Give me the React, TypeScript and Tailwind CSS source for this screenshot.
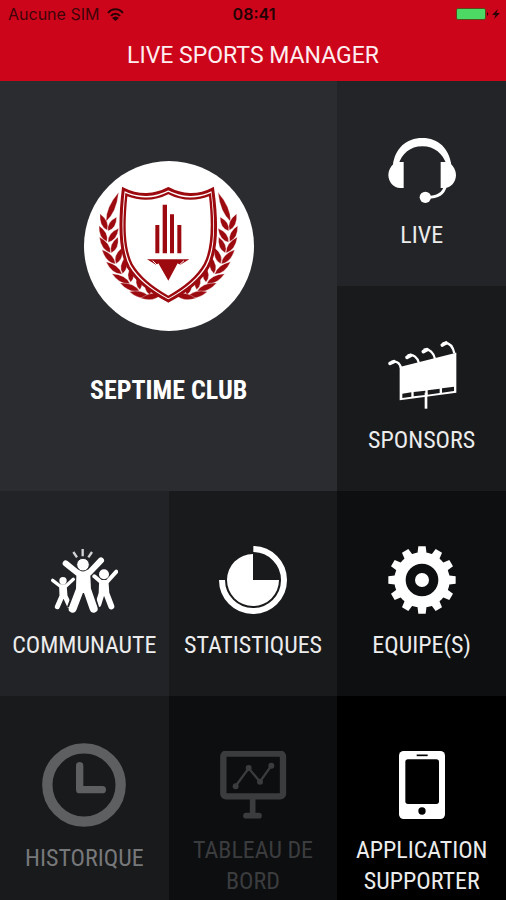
import type { ReactNode } from 'react'

type Point = [number, number]

type TileProps = {
  label: string
  className: string
  iconClassName?: string
  disabled?: boolean
  icon: ReactNode
}

// base and tip of every leaf on the left branch
const leaves: [Point, Point][] = [
  [[98, 218], [136, 130]],
  [[102, 244], [80, 194]],
  [[104, 246], [130, 204]],
  [[101, 278], [77, 230]],
  [[104, 280], [136, 238]],
  [[112, 312], [78, 264]],
  [[114, 312], [134, 264]],
  [[126, 345], [86, 302]],
  [[128, 344], [146, 296]],
  [[146, 376], [98, 338]],
  [[148, 374], [156, 324]],
  [[170, 404], [116, 374]],
  [[172, 400], [174, 350]],
  [[198, 426], [140, 402]],
  [[200, 422], [194, 374]],
  [[228, 444], [168, 428]],
  [[230, 438], [218, 394]],
  [[262, 438], [202, 448]],
]

function leafPath([[bx, by], [tx, ty]]: [Point, Point]) {
  const dx = tx - bx
  const dy = ty - by
  const length = Math.hypot(dx, dy)
  const mx = bx + dx * 0.4
  const my = by + dy * 0.4
  const ox = (dy / length) * 18
  const oy = (dx / length) * 18
  return `M${bx} ${by}Q${mx - ox} ${my + oy} ${tx} ${ty}Q${mx + ox} ${my - oy} ${bx} ${by}Z`
}

function Branch() {
  return (
    <g fill="#9c0a10" stroke="#fff" strokeWidth="1">
      {leaves.map((leaf, i) => (
        <path key={i} d={leafPath(leaf)} />
      ))}
    </g>
  )
}

function ClubLogo() {
  const shield =
    'M150 120C196 144 246 140 285 119C324 140 374 144 418 120C432 222 432 302 404 354C378 400 330 432 285 456C240 432 192 400 165 354C138 302 138 222 150 120Z'
  return (
    <svg viewBox="32 36 510 510" className="size-full" aria-hidden="true">
      <circle cx="287" cy="291" r="255" fill="#fff" />
      <Branch />
      <g transform="translate(570 0) scale(-1 1)">
        <Branch />
      </g>
      <path d={shield} fill="#fff" stroke="#9c0a10" strokeWidth="9" />
      <path
        d="M159 137C204 155 248 151 285 132C322 151 366 155 410 137C420 226 420 298 394 347C370 390 328 420 285 444C242 420 200 390 175 347C150 298 150 226 159 137Z"
        fill="none"
        stroke="#9c0a10"
        strokeWidth="7"
      />
      <g fill="#9c0a10">
        <path d="M246 228H258V313H246ZM268 167H281V313H268ZM290 196H302V313H290ZM312 228H324V313H312Z" />
        <path d="M221 331H348L320 348L313 343L285 395L255 343L249 348Z" />
      </g>
      <path d="M238 335L253 350M332 335L316 350" stroke="#fff" strokeWidth="3" />
    </svg>
  )
}

function HeadsetIcon() {
  return (
    <svg viewBox="144 48 204 204" className="size-full" aria-hidden="true">
      <path
        d="M159 134C165 86 198 54 247 54S327 86 334 134H320C308 101 284 79 247 79S186 101 175 134Z"
        fill="#fff"
      />
      <path d="M161 126H191V204H180C162 204 145 186 145 165C145 151 152 139 161 131Z" fill="#fff" />
      <path d="M332 126H302V204H313C332 204 348 186 348 165C348 151 341 139 332 131Z" fill="#fff" />
      <path d="M316 198C311 221 294 232 262 232" fill="none" stroke="#fff" strokeWidth="9" />
      <circle cx="256" cy="232" r="17" fill="#fff" />
    </svg>
  )
}

function BillboardIcon() {
  return (
    <svg viewBox="144 35 204 204" className="size-full overflow-visible" aria-hidden="true">
      <path
        fillRule="evenodd"
        fill="#fff"
        d="M179 113L349 70V190L179 213ZM187 193V206L214 202V189ZM221 188V201L256 197V184ZM263 183V196L299 191V178ZM306 177V190L342 185V172Z"
      />
      <path d="M258 190V238" stroke="#fff" strokeWidth="8" />
      <g fill="none" stroke="#fff" strokeWidth="7">
        <path d="M154 98C170 94 179 100 183 116" />
        <path d="M203 78C221 74 233 84 237 102" />
        <path d="M251 61C269 58 281 70 285 89" />
        <path d="M308 42C326 38 338 50 343 72" />
      </g>
      <g stroke="#fff" strokeWidth="11" strokeLinecap="round">
        <path d="M150 102L162 97M201 84L212 78M250 67L261 61M307 47L318 41" />
      </g>
    </svg>
  )
}

function CommunityIcon() {
  return (
    <svg viewBox="151 48 204 204" className="size-full" aria-hidden="true">
      <g fill="none" stroke="#fff" strokeLinecap="round" strokeLinejoin="round">
        <path d="M159 151L181 168H199L221 148" strokeWidth="10" />
        <path d="M186 172L187 198L173 230M194 172L196 198L209 226" strokeWidth="15" />
        <path d="M284 139L304 156H322L350 125" strokeWidth="12" />
        <path d="M307 162L306 190L296 222M318 162L320 190L335 229" strokeWidth="18" />
      </g>
      <circle cx="190" cy="152" r="11" fill="#fff" />
      <circle cx="313" cy="133" r="15" fill="#fff" />
      <path
        d="M243 140L240 176L217 236M260 140L264 176L283 236"
        fill="none"
        stroke="#222327"
        strokeWidth="32"
        strokeLinejoin="round"
      />
      <g fill="none" stroke="#fff" strokeLinecap="round" strokeLinejoin="round">
        <path d="M198 100L234 129H268L304 91" strokeWidth="18" />
        <path d="M242 138L241 178L219 236M260 138L262 178L282 236" strokeWidth="24" />
        <path d="M251 134V176" strokeWidth="26" />
      </g>
      <circle cx="250" cy="104" r="19" fill="#fff" stroke="#222327" strokeWidth="3" />
      <path d="M249 57V79M221 66L232 82M277 66L266 82" stroke="#d4d4d5" strokeWidth="7" />
    </svg>
  )
}

function PieIcon() {
  return (
    <svg viewBox="148 48 204 204" className="size-full" aria-hidden="true">
      <path d="M250 72V150H328A78 78 0 1 1 250 72Z" fill="#fff" />
      <path d="M251 57A93 93 0 1 1 157 150" fill="none" stroke="#fff" strokeWidth="18" />
    </svg>
  )
}

function GearIcon() {
  const teeth = Array.from({ length: 12 }, (_, i) => i * 30)
  return (
    <svg viewBox="145 48 204 204" className="size-full" aria-hidden="true">
      <g fill="#fff">
        {teeth.map((angle) => (
          <path key={angle} d="M233 74L236 49H258L261 74Z" transform={`rotate(${angle} 247 150)`} />
        ))}
        <circle cx="247" cy="150" r="21" />
      </g>
      <circle cx="247" cy="150" r="66" fill="none" stroke="#fff" strokeWidth="34" />
    </svg>
  )
}

function ClockIcon() {
  return (
    <svg viewBox="127 39 252 252" className="size-full" aria-hidden="true">
      <circle cx="253" cy="165" r="110" fill="none" stroke="#5e5f61" strokeWidth="31" />
      <path
        d="M240 107V179H308"
        fill="none"
        stroke="#5e5f61"
        strokeWidth="22"
        strokeLinecap="round"
        strokeLinejoin="round"
      />
    </svg>
  )
}

function DashboardIcon() {
  return (
    <svg viewBox="148 63 204 204" className="size-full" aria-hidden="true">
      <g fill="none" stroke="#3b3c3e">
        <rect x="161" y="71" width="179" height="128" rx="8" strokeWidth="19" />
        <path d="M249 206V252" strokeWidth="17" />
        <path d="M229 257H268" strokeWidth="17" strokeLinecap="round" />
        <path d="M198 168L237 115L271 155L305 107" strokeWidth="7" />
      </g>
      <g fill="#3b3c3e">
        <circle cx="198" cy="169" r="9" />
        <circle cx="237" cy="114" r="9" />
        <circle cx="271" cy="155" r="9" />
        <circle cx="305" cy="107" r="9" />
      </g>
    </svg>
  )
}

function PhoneIcon() {
  return (
    <svg viewBox="145 63 204 204" className="size-full" aria-hidden="true">
      <rect x="178" y="63" width="138" height="204" rx="14" fill="#fff" />
      <rect x="197" y="88" width="101" height="134" rx="8" fill="#000" />
      <path d="M231 76H264" stroke="#000" strokeWidth="5" />
      <circle cx="247" cy="243" r="11" fill="#000" />
    </svg>
  )
}

function Tile({ label, className, iconClassName = 'mb-4 size-[68px]', disabled, icon }: TileProps) {
  return (
    <button type="button" disabled={disabled} className={`flex flex-col items-center justify-start ${className}`}>
      <span className={`shrink-0 ${iconClassName}`}>{icon}</span>
      <span className="max-w-full">{label}</span>
    </button>
  )
}

function StatusBar() {
  return (
    <div className="grid h-7 grid-cols-3 items-center pl-2 pr-1.5 font-['Inter',sans-serif] text-base text-[#400308]">
      <div className="flex items-center gap-2">
        <span>Aucune SIM</span>
        <svg viewBox="0 0 17 13" className="h-[13px] w-[17px]" aria-hidden="true">
          <g fill="none" stroke="#2a0205" strokeWidth="2">
            <path d="M1 5C5 0 12 0 16 5" />
            <path d="M4 8C6 5 11 5 13 8" />
          </g>
          <path d="M5 10Q8.5 7 12 10L8.5 13Z" fill="#2a0205" />
        </svg>
      </div>
      <span className="text-center font-semibold text-[#240204]">08:41</span>
      <div className="flex justify-end">
        <svg viewBox="0 0 44 14" className="h-3.5 w-11" aria-hidden="true">
          <rect x="0.5" y="1.5" width="29" height="11" rx="1.5" fill="#4cd964" stroke="#5b4a1c" />
          <path d="M31 5Q33.5 7 31 9Z" fill="#2a0205" />
          <path d="M42 2L36 8H39.500L38 12L44 6H40.500Z" fill="#2a0205" />
        </svg>
      </div>
    </div>
  )
}

export default function App() {
  return (
    <div className="flex min-h-screen flex-col bg-black font-['Roboto',sans-serif]">
      <header className="bg-[#cd051b]">
        <StatusBar />
        <h1 className="pb-[9px] pt-3 text-center text-[23px] leading-8 text-[#ffeef0]">LIVE SPORTS MANAGER</h1>
      </header>
      <main className="grid flex-1 auto-rows-[minmax(205px,1fr)] grid-cols-3 font-['Roboto_Condensed','Liberation_Sans_Narrow','Roboto',sans-serif] text-2xl leading-[31px] text-[#ececec]">
        <Tile
          label="SEPTIME CLUB"
          className="col-span-2 row-span-2 bg-[#2b2c30] pt-20 text-[26px] font-bold text-white"
          iconClassName="mb-11 size-[170px]"
          icon={<ClubLogo />}
        />
        <Tile label="LIVE" className="bg-[#232427] pt-[55px]" icon={<HeadsetIcon />} />
        <Tile label="SPONSORS" className="bg-[#191a1c] pt-[55px]" icon={<BillboardIcon />} />
        <Tile label="COMMUNAUTE" className="bg-[#222327] pt-[55px]" icon={<CommunityIcon />} />
        <Tile label="STATISTIQUES" className="bg-[#191a1c] pt-[55px]" icon={<PieIcon />} />
        <Tile label="EQUIPE(S)" className="bg-[#0e0f11] pt-[55px]" icon={<GearIcon />} />
        <Tile
          label="HISTORIQUE"
          className="bg-[#191a1c] pt-[47px] text-[#77787a]"
          iconClassName="mb-4 size-[84px]"
          disabled
          icon={<ClockIcon />}
        />
        <Tile
          label="TABLEAU DE BORD"
          className="bg-[#0d0e10] px-4 pt-[55px] text-[#3b3c3e]"
          disabled
          icon={<DashboardIcon />}
        />
        <Tile label="APPLICATION SUPPORTER" className="bg-black px-4 pt-[55px]" icon={<PhoneIcon />} />
      </main>
    </div>
  )
}
